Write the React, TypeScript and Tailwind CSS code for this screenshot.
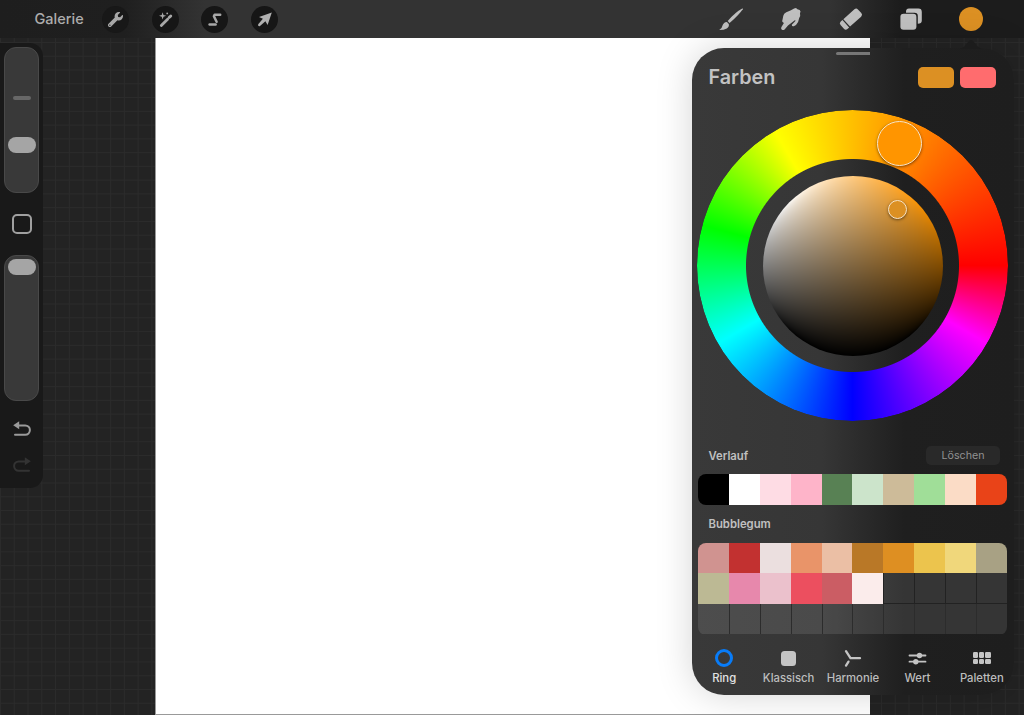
import { useLayoutEffect, useRef } from "react";
import { FaWrench } from "react-icons/fa";

const history = [
  "bg-black",
  "bg-white",
  "bg-[#fedce4]",
  "bg-[#feb4c9]",
  "bg-[#588154]",
  "bg-[#cce4cb]",
  "bg-[#cdbb99]",
  "bg-[#a0de98]",
  "bg-[#fbdcc6]",
  "bg-[#e94318]",
];

const bubblegum = [
  "bg-[#d09390]",
  "bg-[#c23130]",
  "bg-[#ebdfdf]",
  "bg-[#e99469]",
  "bg-[#ebbfa5]",
  "bg-[#b97827]",
  "bg-[#de8f22]",
  "bg-[#ecc44d]",
  "bg-[#f0d77b]",
  "bg-[#a8a184]",
  "bg-[#bcb994]",
  "bg-[#e788ac]",
  "bg-[#ebc1cc]",
  "bg-[#ec4f5f]",
  "bg-[#cb5d64]",
  "bg-[#fbeceb]",
];

const emptyCells = Array.from({ length: 14 }, (_, i) => i + bubblegum.length);

function Header() {
  return (
    <header className="flex h-[38px] shrink-0 items-center bg-[linear-gradient(90deg,#1e1e1e_0,#1f1f1f_125px,#333_205px,#333_830px,#1c1c1c_900px)] text-[#bdbdbd]">
      <span className="w-[68px] pl-[34.5px] text-[14.5px] font-medium text-[#adadad]">
        Galerie
      </span>

      {/* Actions */}
      <div className="ml-[34px] flex items-center gap-[22.7px]">
        <div className="flex size-[27px] items-center justify-center rounded-full bg-[#181818]">
          <FaWrench size={15} className="text-[#a8a8a8]" />
        </div>
        <div className="flex size-[27px] items-center justify-center rounded-full bg-[#161616]">
          <svg width="27" height="27" viewBox="0 0 27 27" fill="none">
            <path d="M9.3 19.6 15.6 13.2" stroke="#a8a8a8" strokeWidth="2.8" strokeLinecap="round" />
            <path d="M17.1 11.6 18.8 9.9" stroke="#a8a8a8" strokeWidth="2.8" strokeLinecap="round" />
            <path
              d="M10.6 6.2 11.5 8.9 14.2 9.8 11.5 10.7 10.6 13.4 9.7 10.7 7 9.8 9.7 8.9Z"
              fill="#a8a8a8"
            />
            <circle cx="15.2" cy="7.4" r="0.9" fill="#a8a8a8" />
          </svg>
        </div>
        <div className="flex size-[27px] items-center justify-center rounded-full bg-[#161616]">
          <svg
            width="27"
            height="27"
            viewBox="0 0 27 27"
            fill="none"
            stroke="#a8a8a8"
            strokeWidth="2.5"
            strokeLinecap="round"
            strokeLinejoin="round"
          >
            <path d="M19.2 8.7H13.6L12.9 10.2 15.6 15.8" />
            <path d="M8.6 18.6H14.6" />
          </svg>
        </div>
        <div className="flex size-[27px] items-center justify-center rounded-full bg-[#161616]">
          <svg width="27" height="27" viewBox="0 0 27 27" fill="#b0b0b0">
            <path d="M20.8 6.6 16.6 19 14.4 15.2 9 19.9Q8 20.5 7.3 19.8Q6.7 19.1 7.4 18.1L11.9 12.8 8 11Z" />
          </svg>
        </div>
      </div>

      {/* Painting tools */}
      <div className="ml-auto mr-[41px] flex items-center gap-[34px]">
        <svg width="26" height="26" viewBox="0 0 26 26" fill="#bfbfbf">
          <path d="M24.3 2.6Q25.2 2.2 24.8 3.2Q21 8.8 11.6 17L9.7 15.1Q17.2 6.3 24.3 2.6Z" />
          <path d="M8.9 16.1 10.8 18Q11.5 20.8 8.8 22.5Q6.3 24 1.2 24Q4.2 22.4 4.4 19.8Q5.6 16.3 8.9 16.1Z" />
        </svg>
        <svg width="26" height="26" viewBox="0 0 26 26" fill="#bfbfbf">
          <path d="M16.1 2.4 18 2Q19 3.6 21.7 4Q23.2 5.2 22 7.2Q22.8 9.9 21.2 12L20.1 16Q18.7 19 15.8 20.2Q13.7 20.7 13.8 18.8L17.4 15Q17.8 14.2 16.8 14.3L10 19.4 6.6 23.4Q5.3 24.6 3.9 23.7Q2.7 22.7 3.3 21.2L5.9 16.9Q3.5 15.9 4.5 13.7L5.3 9.8Q5.7 7.3 8.3 6.3L13 4.3Z" />
        </svg>
        <svg width="26" height="26" viewBox="0 0 26 26" fill="#bfbfbf">
          <g transform="rotate(-42 13 13)">
            <path d="M7.2 8H22.1Q24.6 8 24.6 10.5V15.5Q24.6 18 22.1 18H7.2Z" />
            <path d="M6 8V18H3.7Q1.2 18 1.2 15.5V10.5Q1.2 8 3.7 8Z" />
          </g>
        </svg>
        <svg width="26" height="26" viewBox="0 0 26 26" fill="#bfbfbf">
          <path d="M11 2.5H20.4Q23.8 2.5 23.8 5.9V14.5Q23.8 17.7 19.8 17.7V10Q19.8 6.7 16.5 6.7H8Q7.7 2.5 11 2.5Z" />
          <rect x="2.4" y="7.8" width="16" height="16" rx="3.2" />
        </svg>
        <div className="ml-[1px] size-6 rounded-full bg-[#dc9023]" />
      </div>
    </header>
  );
}

function Sidebar() {
  return (
    <aside className="mt-[5px] flex h-[445px] w-[43px] shrink-0 flex-col items-center rounded-r-[13px] bg-[#191919] pt-[4px]">
      <div className="flex h-[146px] w-[35px] flex-col items-center rounded-[12px] border border-[#494949] bg-[#393939]">
        <div className="mt-[47.5px] h-[4px] w-[18px] rounded-full bg-[#676767]" />
        <div className="mt-[37px] h-[16px] w-[28px] rounded-full bg-[#a5a5a5]" />
      </div>
      <div className="mt-[21px] size-[20px] rounded-[5px] border-2 border-[#a0a0a0]" />
      <div className="mt-[21px] flex h-[146px] w-[35px] flex-col items-center rounded-[12px] border border-[#494949] bg-[#393939]">
        <div className="mt-[3px] h-[16px] w-[28px] rounded-full bg-[#a5a5a5]" />
      </div>
      <svg className="mt-[19px]" width="20" height="18" viewBox="0 0 20 18" fill="none">
        <path d="M5 5.4H13.2A4.7 4.7 0 0 1 13.2 14.8H3" stroke="#9a9a9a" strokeWidth="2" strokeLinecap="round" />
        <path d="M1.2 5.2 7.2 1.2V9.2Z" fill="#9a9a9a" />
      </svg>
      <svg className="mt-[18px]" width="20" height="18" viewBox="0 0 20 18" fill="none">
        <path d="M15 5.4H6.8A4.7 4.7 0 0 0 6.8 14.8H17" stroke="#333" strokeWidth="2" strokeLinecap="round" />
        <path d="M18.8 5.2 12.8 1.2V9.2Z" fill="#333" />
      </svg>
    </aside>
  );
}

// Saturation runs left to right and brightness bottom to top,
// with the square stretched onto a disc.
function ShadeDisc() {
  const ref = useRef<HTMLCanvasElement>(null);

  useLayoutEffect(() => {
    const ctx = ref.current?.getContext("2d");
    if (!ctx) return;
    const size = 180;
    const image = ctx.createImageData(size, size);
    const hue = [255, 149, 0];
    const k = 2 * Math.SQRT2;
    const root = (n: number) => Math.sqrt(Math.max(0, n));

    for (let py = 0; py < size; py++) {
      for (let px = 0; px < size; px++) {
        const u = ((px + 0.5) / size) * 2 - 1;
        const v = 1 - ((py + 0.5) / size) * 2;
        const d = u * u - v * v;
        const x = (root(2 + d + k * u) - root(2 + d - k * u)) / 2;
        const y = (root(2 - d + k * v) - root(2 - d - k * v)) / 2;
        const sat = Math.min(1, Math.max(0, (x + 1) / 2));
        const val = Math.min(1, Math.max(0, (y + 1) / 2));
        const i = (py * size + px) * 4;
        for (let c = 0; c < 3; c++) {
          image.data[i + c] = (255 + (hue[c] - 255) * sat) * val;
        }
        image.data[i + 3] = 255;
      }
    }
    ctx.putImageData(image, 0, 0);
  }, []);

  return <canvas ref={ref} width={180} height={180} className="size-[180px] rounded-full" />;
}

function ColorRing() {
  return (
    <div className="relative ml-[5px] mt-[21px] flex size-[311px] shrink-0 items-center justify-center">
      <div className="absolute inset-0 rounded-full bg-[conic-gradient(from_90deg,#f00_0deg,#f0f_30deg,#00f_90deg,#0ff_150deg,#0f0_195deg,#ff0_240deg,#f00_360deg)] [mask-image:radial-gradient(circle,transparent_106px,black_107px)]" />
      <ShadeDisc />
      <div className="absolute left-[179.5px] top-[11px] size-[45px] rounded-full border-[1.5px] border-[#fbe6c8] bg-[#ff9500] shadow-[0_1px_3px_rgba(0,0,0,0.5)]" />
      <div className="absolute left-[191px] top-[89.5px] size-[19px] rounded-full border-[1.5px] border-[#fbe6c8] bg-[#dc9023] shadow-[0_1px_3px_rgba(0,0,0,0.5)]" />
    </div>
  );
}

function Tabs() {
  return (
    <nav className="mt-[14px] grid w-[322px] grid-cols-5 text-[11.3px] font-medium leading-[14px] text-[#bdbdbd]">
      <div className="flex flex-col items-center gap-[3px] text-[#e2e2e2]">
        <div className="flex h-[19px] items-center">
          <div className="size-[18px] rounded-full border-[3px] border-[#087cf8]" />
        </div>
        Ring
      </div>
      <div className="flex flex-col items-center gap-[3px]">
        <div className="flex h-[19px] items-center">
          <div className="size-[15px] rounded-[3.5px] bg-[#c4c4c4]" />
        </div>
        Klassisch
      </div>
      <div className="flex flex-col items-center gap-[3px]">
        <svg width="19" height="19" viewBox="0 0 19 19" fill="none" stroke="#c4c4c4" strokeWidth="2.3" strokeLinecap="round">
          <path d="M3 2.2 7.5 9.2H17" />
          <path d="M5.5 12.6 3 16.6" />
        </svg>
        Harmonie
      </div>
      <div className="flex flex-col items-center gap-[3px]">
        <svg width="19" height="19" viewBox="0 0 19 19" fill="#c4c4c4" stroke="#c4c4c4" strokeWidth="1.8" strokeLinecap="round">
          <path d="M1.5 6.5H17.5M1.5 12.7H17.5" />
          <circle cx="11.5" cy="6.5" r="1.8" />
          <circle cx="7.8" cy="12.7" r="1.8" />
        </svg>
        Wert
      </div>
      <div className="flex flex-col items-center gap-[3px]">
        <div className="grid h-[19px] grid-cols-3 content-center gap-[1px]">
          {[0, 1, 2, 3, 4, 5].map((n) => (
            <div key={n} className="size-[5.2px] rounded-[1.2px] bg-[#c4c4c4]" />
          ))}
        </div>
        Paletten
      </div>
    </nav>
  );
}

function ColorPanel() {
  return (
    <section className="absolute left-[692px] top-[48px] flex h-[647px] w-[322px] flex-col rounded-[32px] bg-[linear-gradient(90deg,#393939_0,#363636_130px,#1f1f1f_212px,#1e1e1e_100%)] shadow-[0_0_36px_rgba(0,0,0,0.17)]">
      {/* Pointer up to the active colour */}
      <svg className="absolute left-[268px] top-[-9px]" width="22" height="10" viewBox="0 0 22 10" fill="#1c1c1c">
        <path d="M0 10Q4 9 8 3Q11 -1 14 3Q18 9 22 10Z" />
      </svg>

      <div className="ml-[144px] mt-[4px] h-[3px] w-[34px] shrink-0 rounded-l-full bg-[#777]" />

      <div className="mt-[11px] flex h-[23px] items-center pl-[16.5px] pr-[18px]">
        <h1 className="text-[19.8px] font-semibold leading-[23px] text-[#c2c2c2]">Farben</h1>
        <div className="ml-auto flex gap-[6px]">
          <div className="h-[21px] w-[36px] rounded-[5px] bg-[#dc9023]" />
          <div className="h-[21px] w-[36px] rounded-[5px] bg-[#ff6c6e]" />
        </div>
      </div>

      <ColorRing />

      <div className="mt-[24px] flex h-[20px] items-center justify-between pl-[16.5px] pr-[14px]">
        <h2 className="pt-[2px] text-[11.3px] font-semibold text-[#c0c0c0]">Verlauf</h2>
        <button className="h-[19px] w-[74px] rounded-[5px] bg-[#292929] text-[10.7px] leading-[19px] text-[#929292]">
          Löschen
        </button>
      </div>
      <div className="ml-[6px] mt-[8.5px] grid h-[31px] w-[309px] grid-cols-10 overflow-hidden rounded-[8px]">
        {history.map((color) => (
          <div key={color} className={color} />
        ))}
      </div>

      <h2 className="mt-[11px] pl-[16.5px] text-[11.3px] font-semibold leading-[16px] text-[#c0c0c0]">
        Bubblegum
      </h2>
      <div className="ml-[6px] mt-[11px] grid h-[92px] w-[309px] grid-cols-10 grid-rows-3 overflow-hidden rounded-[8px]">
        {bubblegum.map((color) => (
          <div key={color} className={color} />
        ))}
        {emptyCells.map((n) => (
          <div
            key={n}
            className={
              n < 20
                ? "border-b border-l border-[#222] bg-white/10 bg-clip-padding"
                : "border-l border-[#2c2c2c] bg-white/10 bg-clip-padding [&:nth-child(21)]:border-l-0"
            }
          />
        ))}
      </div>

      <Tabs />
    </section>
  );
}

export default function App() {
  return (
    <div className="relative flex h-[715px] w-[1024px] flex-col overflow-hidden bg-[#232323] font-[Inter,sans-serif]">
      <Header />
      <main className="flex flex-1 bg-[linear-gradient(90deg,#2b2b2b_1px,transparent_1px),linear-gradient(#2b2b2b_1px,transparent_1px)] bg-size-[13.77px_13.77px] bg-position-[0px_4px]">
        <Sidebar />
        <div className="ml-[112px] h-[677px] w-[715px] border-b border-l border-[#999] bg-white" />
      </main>
      <ColorPanel />
    </div>
  );
}
